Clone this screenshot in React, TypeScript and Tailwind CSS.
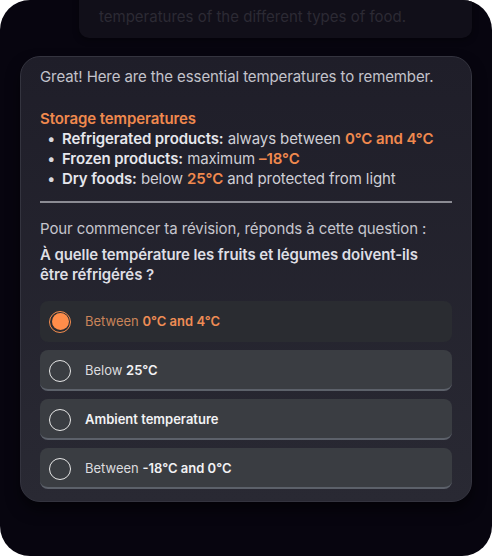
import React from "react";

const options = [
  { pre: "Between", bold: "0°C and 4°C", selected: true },
  { pre: "Below", bold: "25°C" },
  { pre: "", bold: "Ambient temperature" },
  { pre: "Between", bold: "-18°C and 0°C" },
];

export default function App() {
  return (
    <div className="bg-white w-[492px] h-[556px]" style={{ fontFamily: "Inter, 'Noto Sans', sans-serif" }}>
      <div className="w-full h-full rounded-[30px] bg-[#07050f] overflow-hidden flex flex-col">
        {/* faded previous message */}
        <div className="ml-[79px] mr-[20px] -mt-[14px] h-[52px] rounded-b-[10px] bg-[#110f19] pl-5 pt-[7px] text-[15px] leading-[20px] text-[#2c2a34] shadow-[0_2px_6px_rgba(0,0,0,0.4)]">
          <div className="h-[14px] overflow-hidden" />
          <div>temperatures of the different types of food.</div>
        </div>

        {/* main card */}
        <div className="mx-[20px] mt-[18px] h-[446px] rounded-[20px] border border-[#34343f] bg-gradient-to-b from-[#1f1e29] to-[#292933] px-[19px] pt-[10px] tracking-[-0.1px] shadow-[0_8px_14px_rgba(0,0,0,0.5)]">
          <p className="text-[15px] leading-[20px] text-[#c3c3cb]">
            Great! Here are the essential temperatures to remember.
          </p>

          <div className="mt-[22px] text-[15px] leading-[20px]">
            <div className="font-semibold text-[#f0894e]">Storage temperatures</div>
            <Bullet label="Refrigerated products:">
              always between <Hi>0°C and 4°C</Hi>
            </Bullet>
            <Bullet label="Frozen products:">
              maximum <Hi>–18°C</Hi>
            </Bullet>
            <Bullet label="Dry foods:">
              below <Hi>25°C</Hi> and protected from light
            </Bullet>
          </div>

          <div className="mt-[12px] h-[2px] bg-[#8b8b93]" />

          <p className="mt-[16px] text-[15px] leading-[20px] text-[#c6c6ce]">
            Pour commencer ta révision, réponds à cette question :
          </p>
          <p className="mt-[6px] text-[15px] leading-[20px] font-semibold text-[#dedee4]">
            À quelle température les fruits et légumes doivent-ils
            <br />
            être réfrigérés ?
          </p>

          <div className="mt-[16px] flex flex-col gap-[8px]">
            {options.map((o, i) => (
              <Option key={i} {...o} />
            ))}
          </div>
        </div>
      </div>
    </div>
  );
}

function Hi({ children }: { children: React.ReactNode }) {
  return <span className="font-semibold text-[#f0894e]">{children}</span>;
}

function Bullet({ label, children }: { label: string; children: React.ReactNode }) {
  return (
    <div className="flex items-center text-[#cfcfd6]">
      <span className="w-[22px] pl-[7px] text-[#d8d8de]">•</span>
      <span>
        <span className="font-semibold text-[#e6e6ec]">{label}</span> {children}
      </span>
    </div>
  );
}

function Option({ pre, bold, selected }: { pre: string; bold: string; selected?: boolean }) {
  if (selected) {
    return (
      <div className="h-[41px] rounded-[8px] bg-[#2a2c31] flex items-center pl-[9px] text-[13px] tracking-normal">
        <span className="w-[22px] h-[22px] rounded-full border border-[#f48c4e] p-[1.5px] flex">
          <span className="flex-1 rounded-full bg-[#ff8d4a]" />
        </span>
        <span className="ml-[14px] text-[#c98459]">
          {pre} <span className="font-semibold text-[#ef8c55]">{bold}</span>
        </span>
      </div>
    );
  }
  return (
    <div className="h-[41px] rounded-[8px] bg-[#3a3d42] border-b-2 border-[#5c616a] flex items-center pl-[9px] pt-[2px] text-[13px] tracking-normal">
      <span className="w-[22px] h-[22px] rounded-full border-[1.5px] border-[#e6e6e6]" />
      <span className="ml-[14px] text-[#dcdcdf]">
        {pre ? pre + " " : ""}
        <span className="font-semibold text-[#f2f2f4]">{bold}</span>
      </span>
    </div>
  );
}
